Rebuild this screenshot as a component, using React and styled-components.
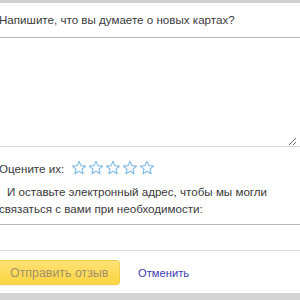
import React from 'react'
import styled, { createGlobalStyle } from 'styled-components'

const GlobalStyle = createGlobalStyle`
html, body {
    margin: 0;
    padding: 0;
    background: #fff;
    overflow: hidden;
}
`;

const Star = () => (
    <svg width="16" height="16" viewBox="0 0 16 16">
        <path
            d="M8 1.2 L9.9 5.6 L14.6 6 L11 9.1 L12.1 13.8 L8 11.3 L3.9 13.8 L5 9.1 L1.4 6 L6.1 5.6 Z"
            fill="#fff"
            stroke="#7fbbe9"
            strokeWidth="1.1"
            strokeLinejoin="round"
        />
    </svg>
)

const App = () => {
    return (
        <Page>
            <GlobalStyle />
            <TopStrip />
            <Form>
                <Title>Напишите, что вы думаете о новых картах?</Title>
                <TextareaBox>
                    <Textarea />
                </TextareaBox>
                <RatingRow>
                    <Label>Оцените их:</Label>
                    <Stars>
                        {[0, 1, 2, 3, 4].map((i) => <Star key={i} />)}
                    </Stars>
                </RatingRow>
                <Hint>И оставьте электронный адрес, чтобы мы могли связаться с вами при необходимости:</Hint>
                <EmailInput />
                <Actions>
                    <SubmitButton>Отправить отзыв</SubmitButton>
                    <CancelLink>Отменить</CancelLink>
                </Actions>
            </Form>
            <BottomStrip />
        </Page>
    )
}

export default App

/** STYLES */
const Page = styled.div`
width: 300px;
height: 300px;
overflow: hidden;
position: relative;
font-family: "Liberation Sans", Arial, sans-serif;
font-size: 11.6px;
color: #3a3a3a;
display: flex;
flex-direction: column;
`;

const TopStrip = styled.div`
height: 3px;
background: #d2d2d2;
flex-shrink: 0;
`;

const BottomStrip = styled.div`
height: 7px;
margin-top: auto;
background: #d4d4d4;
flex-shrink: 0;
`;

const Form = styled.div`
margin-left: -3px;
width: 306px;
display: flex;
flex-direction: column;
`;

const Title = styled.div`
height: 34px;
line-height: 34px;
padding-left: 2px;
white-space: nowrap;
`;

const TextareaBox = styled.div`
border-top: 1px solid #b5b5b5;
border-bottom: 1px solid #d6d6d6;
`;

const Textarea = styled.textarea`
display: block;
box-sizing: border-box;
width: 300px;
height: 108px;
margin: 0;
border: none;
outline: none;
font-family: inherit;
resize: vertical;
`;

const RatingRow = styled.div`
display: flex;
align-items: center;
height: 18px;
margin-top: 12px;
padding-left: 2px;
`;

const Label = styled.span`
color: #3a3a3a;
`;

const Stars = styled.div`
display: flex;
gap: 1px;
margin-left: 7px;
`;

const Hint = styled.div`
margin-top: 6px;
line-height: 17px;
padding-left: 2px;
text-indent: 8px;
width: 275px;
`;

const EmailInput = styled.input`
display: block;
box-sizing: border-box;
width: 306px;
height: 27px;
margin: 7px 0 0;
border: 1px solid #dcdcdc;
border-top-color: #b5b5b5;
outline: none;
`;

const Actions = styled.div`
display: flex;
align-items: center;
margin-top: 9px;
gap: 18px;
`;

const SubmitButton = styled.div`
box-sizing: border-box;
height: 25px;
width: 123px;
padding-left: 12px;
line-height: 24px;
font-size: 12.4px;
border-radius: 3px;
background: linear-gradient(#ffe277, #fcd540);
border: 1px solid #f0cf4f;
box-shadow: 0 1px 0 rgba(0,0,0,0.05);
color: #a2916a;
white-space: nowrap;
`;

const CancelLink = styled.span`
color: #3b3bb3;
font-size: 11.2px;
cursor: pointer;
`;
